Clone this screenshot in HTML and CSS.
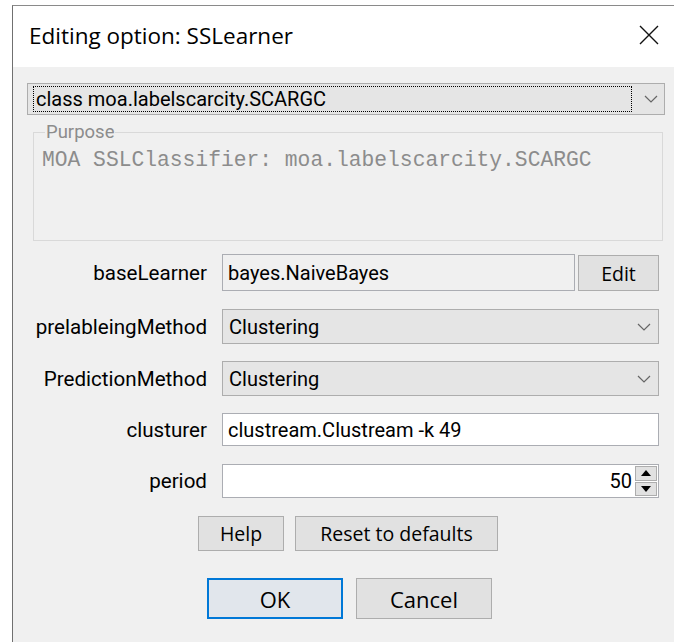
FILE: index.html
```html
<!DOCTYPE html>
<html>
<head>
<meta charset="utf-8">
<title>Editing option: SSLearner</title>
<link rel="stylesheet" href="styles.css">
</head>
<body>
<div class="window">
  <div class="titlebar">
    <span class="title">Editing option: SSLearner</span>
    <svg class="close" width="20" height="20" viewBox="0 0 20 20"><path d="M1 1 L19 19 M19 1 L1 19" stroke="#111" stroke-width="1.4" fill="none"/></svg>
  </div>
  <div class="content">
    <div class="combo class-combo">
      <span class="focus">class moa.labelscarcity.SCARGC</span>
      <svg class="chev" width="14" height="8" viewBox="0 0 14 8"><path d="M1 1 L7 7 L13 1" stroke="#666" stroke-width="1.2" fill="none"/></svg>
    </div>
    <fieldset class="purpose">
      <legend>Purpose</legend>
      <div class="purpose-text">MOA SSLClassifier: moa.labelscarcity.SCARGC</div>
    </fieldset>

    <div class="form">
      <div class="row r1">
        <label class="lbl">baseLearner</label>
        <div class="field">
          <div class="text ro">bayes.NaiveBayes</div>
          <button class="btn edit">Edit</button>
        </div>
      </div>
      <div class="row r2">
        <label class="lbl">prelableingMethod</label>
        <div class="field">
          <div class="combo">
            <span>Clustering</span>
            <svg class="chev" width="14" height="8" viewBox="0 0 14 8"><path d="M1 1 L7 7 L13 1" stroke="#666" stroke-width="1.2" fill="none"/></svg>
          </div>
        </div>
      </div>
      <div class="row r3">
        <label class="lbl">PredictionMethod</label>
        <div class="field">
          <div class="combo">
            <span>Clustering</span>
            <svg class="chev" width="14" height="8" viewBox="0 0 14 8"><path d="M1 1 L7 7 L13 1" stroke="#666" stroke-width="1.2" fill="none"/></svg>
          </div>
        </div>
      </div>
      <div class="row r4">
        <label class="lbl">clusturer</label>
        <div class="field">
          <div class="text white">clustream.Clustream -k 49</div>
        </div>
      </div>
      <div class="row r5">
        <label class="lbl">period</label>
        <div class="field">
          <div class="spinner">
            <span class="num">50</span>
            <div class="arrows">
              <div class="arr"><svg width="12" height="8" viewBox="0 0 12 8"><path d="M6 1 L11 7 L1 7 Z" fill="#000"/></svg></div>
              <div class="arr"><svg width="12" height="8" viewBox="0 0 12 8"><path d="M1 1 L11 1 L6 7 Z" fill="#000"/></svg></div>
            </div>
          </div>
        </div>
      </div>
    </div>

    <div class="btnrow help-row">
      <button class="btn help">Help</button>
      <button class="btn reset">Reset to defaults</button>
    </div>
    <div class="btnrow ok-row">
      <button class="btn big ok">OK</button>
      <button class="btn big cancel">Cancel</button>
    </div>
  </div>
</div>
</body>
</html>
```
FILE: styles.css
```css
html, body {
  margin: 0;
  padding: 0;
  background: #ffffff;
  height: 100%;
  overflow: hidden;
}

.window {
  margin: 5px 0 0 12px;
  border-top: 1px solid #8a8a8a;
  border-left: 1px solid #707070;
  height: 640px;
  display: flex;
  flex-direction: column;
  font-family: "Roboto", "Liberation Sans", sans-serif;
}

.titlebar {
  height: 61px;
  flex: none;
  background: #ffffff;
  display: flex;
  align-items: center;
  justify-content: space-between;
  padding: 0 15px 0 16px;
}

.title {
  font-family: "Open Sans", "Noto Sans", sans-serif;
  font-size: 22.5px;
  color: #000;
  margin-top: -2px;
}

.close {
  margin-top: -3px;
}

.content {
  flex: 1;
  background: #f0f0f0;
  padding: 16px 9px 0 14px;
}

/* drop-down boxes */
.combo {
  height: 35px;
  box-sizing: border-box;
  border: 1px solid #adadad;
  background: #e5e5e5;
  display: flex;
  align-items: center;
  justify-content: space-between;
  padding: 0 7px 0 6px;
  font-size: 20px;
  color: #000;
}

.class-combo {
  height: 32px;
  padding: 2px 6px 2px 5px;
}

.class-combo .focus {
  flex: 1;
  align-self: stretch;
  display: flex;
  align-items: center;
  border: 1px dotted #000;
  margin-right: 12px;
  padding-left: 2px;
}

.chev {
  flex: none;
}

/* Purpose group */
.purpose {
  margin: 6px 2px 0 6px;
  padding: 0 0 0 8px;
  border: 1px solid #d9d9d9;
  height: 120px;
  box-sizing: border-box;
}

.purpose legend {
  color: #8c8c8c;
  font-size: 18.5px;
  padding: 0 1px;
  margin-left: 3px;
}

.purpose-text {
  font-family: "Liberation Mono", monospace;
  font-size: 21.3px;
  color: #8c8c8c;
  margin-top: 5px;
}

/* option rows */
.form {
  margin-top: 13px;
  margin-right: 6px;
}

.row {
  display: grid;
  grid-template-columns: 180px 1fr;
  column-gap: 15px;
  align-items: stretch;
}

.r1 { height: 37px; }
.r2 { height: 35px; margin-top: 18px; }
.r3 { height: 35px; margin-top: 17px; }
.r4 { height: 33px; margin-top: 17px; }
.r5 { height: 34px; margin-top: 18px; }

.lbl {
  text-align: right;
  align-self: center;
  font-size: 20.6px;
  color: #000;
  white-space: nowrap;
}

.field {
  display: flex;
  gap: 3px;
  min-width: 0;
}

.field > .combo { flex: 1; height: auto; }

.text {
  flex: 1;
  box-sizing: border-box;
  border: 1px solid #abadb3;
  display: flex;
  align-items: center;
  padding-left: 5px;
  font-size: 20px;
  color: #000;
}

.text.ro { background: #f0f0f0; }
.text.white { background: #ffffff; }

.btn {
  font-family: "Open Sans", "Noto Sans", sans-serif;
  background: #e1e1e1;
  border: 1px solid #adadad;
  color: #000;
  font-size: 19.5px;
  padding: 0;
  margin: 0;
}

.edit {
  width: 81px;
  margin-top: 1px;
}

.spinner {
  flex: 1;
  display: flex;
  border: 1px solid #abadb3;
  background: #fff;
  align-items: stretch;
}

.num {
  flex: 1;
  text-align: right;
  align-self: center;
  font-size: 20px;
  padding-right: 3px;
}

.arrows {
  width: 22px;
  display: flex;
  flex-direction: column;
  gap: 1px;
  padding: 1px 1px 1px 0;
}

.arr {
  flex: 1;
  background: #e1e1e1;
  border: 1px solid #adadad;
  display: flex;
  align-items: center;
  justify-content: center;
}

/* dialog buttons */
.btnrow {
  display: flex;
}

.help-row {
  margin-top: 18px;
  padding-left: 171px;
  gap: 11px;
}

.help { width: 86px; height: 35px; }
.reset { width: 203px; height: 35px; }

.ok-row {
  margin-top: 27px;
  padding-left: 180px;
  gap: 13px;
}

.big {
  width: 136px;
  height: 41px;
  font-size: 22px;
}

.ok {
  border: 2px solid #0078d7;
  background: #e1e6ec;
}
```
